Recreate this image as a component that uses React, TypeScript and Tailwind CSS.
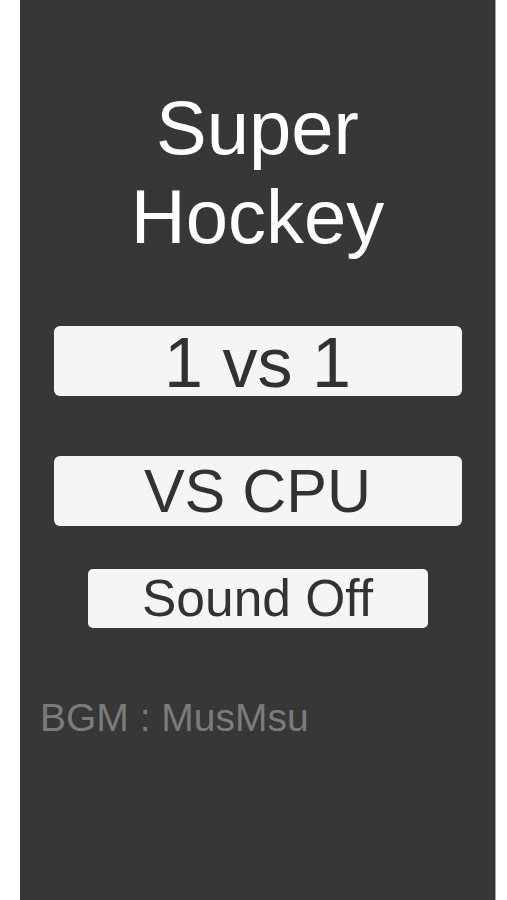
export default function App() {
  return (
    <div className="min-h-[900px] bg-white" style={{ fontFamily: '"Liberation Sans", Arial, sans-serif' }}>
      <div className="ml-[20px] w-[476px] h-[900px] bg-[#373737] border-r border-[#a0a0a0] flex flex-col">
        <h1 className="mt-[83px] text-center text-white text-[76px] leading-[89px] font-normal">
          Super
          <br />
          Hockey
        </h1>

        <button className="mt-[65px] mx-auto w-[408px] h-[70px] pt-[2px] rounded-[6px] bg-[#f5f5f5] text-[#323232] text-[70px] leading-[70px] text-center">
          1 vs 1
        </button>

        <button className="mt-[60px] mx-auto w-[408px] h-[70px] rounded-[6px] bg-[#f5f5f5] text-[#323232] text-[61px] leading-[70px] text-center">
          VS CPU
        </button>

        <button className="mt-[43px] mx-auto w-[340px] h-[59px] rounded-[5px] bg-[#f5f5f5] text-[#323232] text-[51.5px] leading-[59px] text-center">
          Sound Off
        </button>

        <p className="mt-[68px] pl-[20px] text-[39px] leading-[44px] text-[#7b7b7b]">BGM : MusMsu</p>
      </div>
    </div>
  )
}
